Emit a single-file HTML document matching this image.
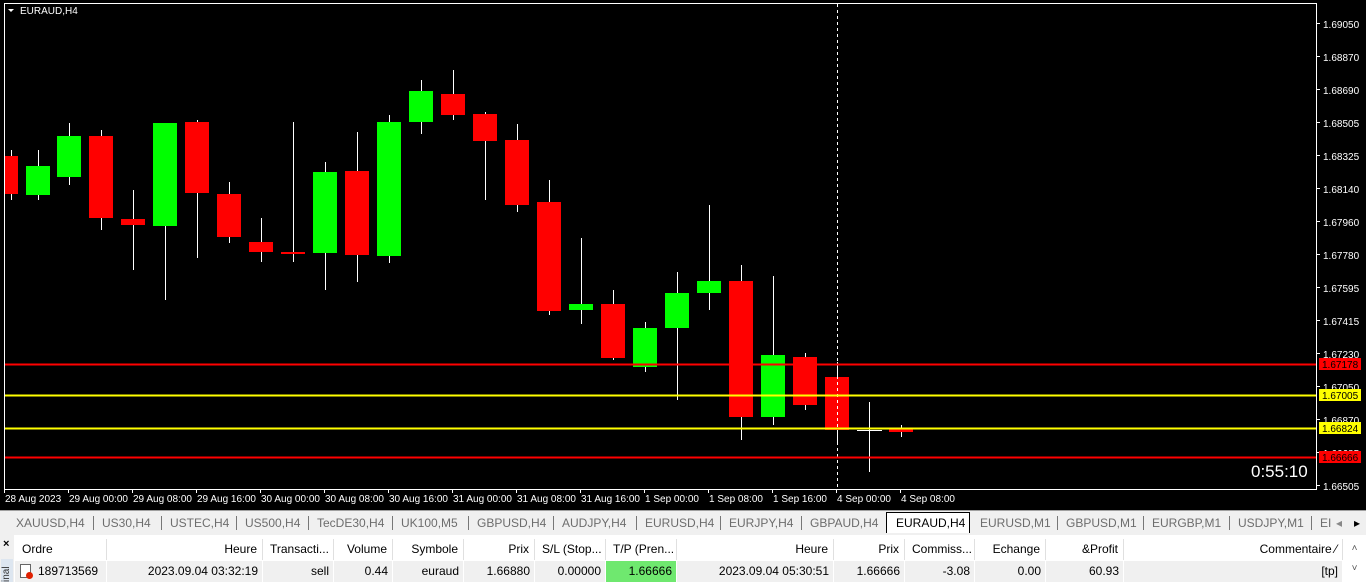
<!DOCTYPE html>
<html><head><meta charset="utf-8"><style>
*{margin:0;padding:0;box-sizing:border-box}
body{width:1366px;height:582px;overflow:hidden;background:#f0f0f0;font-family:"Liberation Sans",sans-serif;font-size:12px;position:relative}
#c{position:absolute;left:0;top:0}
.tabs{position:absolute;left:0;top:510px;width:1366px;height:23px;background:#f0f0f0;border-top:1px solid #a0a0a0}
.tab{position:absolute;top:3px;height:18px;color:#6d6d6d;font-size:12px;line-height:18px}
.sep{position:absolute;top:5px;width:1px;height:14px;background:#777}
.tbl{position:absolute;left:0;top:535px;width:1366px;height:47px;background:#fff}
.h,.r{position:absolute;height:21px;line-height:21px;font-size:12px;color:#000;white-space:nowrap;overflow:hidden}
.h{top:4px;background:#fff;border-right:1px solid #e0e0e0}
.r{top:26px;background:#f0f0f0;border-right:1px solid #fff}
</style></head><body>
<svg id="c" width="1366" height="510" xmlns="http://www.w3.org/2000/svg" font-family="Liberation Sans,sans-serif">
<rect x="0" y="0" width="1366" height="510" fill="#000"/>
<rect x="4.5" y="3.5" width="1312" height="486" fill="none" stroke="#fff"/>
<g id="cand"></g>
<line x1="837.5" y1="4" x2="837.5" y2="489" stroke="#fff" stroke-dasharray="3,3"/>
<line x1="5" y1="364.5" x2="1316" y2="364.5" stroke="#f00" stroke-width="2"/>
<line x1="5" y1="395.5" x2="1316" y2="395.5" stroke="#ff0" stroke-width="2"/>
<line x1="5" y1="428.5" x2="1316" y2="428.5" stroke="#ff0" stroke-width="2"/>
<line x1="5" y1="457.5" x2="1316" y2="457.5" stroke="#f00" stroke-width="2"/>
<polygon points="8,9 14,9 11,12" fill="#fff"/>
<text x="20" y="14" fill="#fff" font-size="10">EURAUD,H4</text>
<g id="ax" fill="#fff" font-size="10"></g>
<rect x="1319" y="358" width="42" height="12" fill="#f00"/><text x="1322" y="368" font-size="10" fill="#000">1.67178</text>
<rect x="1319" y="389" width="42" height="12" fill="#ff0"/><text x="1322" y="399" font-size="10" fill="#000">1.67005</text>
<rect x="1319" y="422" width="42" height="12" fill="#ff0"/><text x="1322" y="432" font-size="10" fill="#000">1.66824</text>
<rect x="1319" y="451" width="42" height="12" fill="#f00"/><text x="1322" y="461" font-size="10" fill="#000">1.66666</text>
<text x="1251" y="477" fill="#fff" font-size="17">0:55:10</text>
<g id="tm" fill="#fff" font-size="10"></g>
</svg>
<div class="tabs" id="tabs"></div>
<div class="tbl">
<div style="position:absolute;left:0;top:0;width:14px;height:47px;background:#f0f0f0"><div style="position:absolute;left:3px;top:3px;font-size:11px;font-weight:bold">×</div><div style="position:absolute;left:1px;top:24px;width:12px;height:23px;background:#dde6f0;font-size:10px;color:#333;writing-mode:vertical-rl;transform:rotate(180deg)">inal</div></div>
<div id="rows"></div>
<div style="position:absolute;left:1343px;top:4px;width:23px;height:43px;background:#fff;font-size:10px;color:#555;text-align:center;line-height:20px">˄<br>˅</div>
</div>
<script>
var C=[[11,1,156,194,150,200,1],[38,0,166,195,150,200],[69,0,136,177,123,185],[101,1,136,218,130,230],[133,1,219,225,190,270],[165,0,123,226,123,300],[197,1,122,193,120,258],[229,1,194,237,182,243],[261,1,242,252,218,262],[293,1,252,254,122,262],[325,0,172,253,162,290],[357,1,171,255,132,282],[389,0,122,256,115,263],[421,0,91,122,80,134],[453,1,94,115,70,120],[485,1,114,141,112,200],[517,1,140,205,124,212],[549,1,202,311,180,315],[581,0,304,310,238,324],[613,1,304,358,290,360],[645,0,328,367,322,372],[677,0,293,328,272,400],[709,0,281,293,205,310],[741,1,281,417,265,440],[773,0,355,417,276,425],[805,1,357,405,353,410],[837,1,377,430,362,445],[901,1,428,432,425,437]];
var s='';C.forEach(function(c){var x=c[0],col=c[1]?'#f00':'#0f0';var l=x-12,w=24;if(c[6]){l=5;w=13;}
s+='<line x1="'+(x+.5)+'" y1="'+c[4]+'" x2="'+(x+.5)+'" y2="'+c[5]+'" stroke="#fff"/>';
s+='<rect x="'+l+'" y="'+c[2]+'" width="'+w+'" height="'+(c[3]-c[2])+'" fill="'+col+'"/>';});
s+='<line x1="869.5" y1="402" x2="869.5" y2="472" stroke="#fff"/><line x1="857" y1="430.5" x2="882" y2="430.5" stroke="#fff"/>';
document.getElementById('cand').innerHTML=s;
var P=['1.69050','1.68870','1.68690','1.68505','1.68325','1.68140','1.67960','1.67780','1.67595','1.67415','1.67230','1.67050','1.66870','1.66685','1.66505'];
s='';P.forEach(function(p,i){var y=24+i*33;s+='<line x1="1316" y1="'+(y-.5)+'" x2="1320" y2="'+(y-.5)+'" stroke="#fff"/><text x="1323" y="'+(y+4)+'">'+p+'</text>';});
document.getElementById('ax').innerHTML=s;
var T=['28 Aug 2023','29 Aug 00:00','29 Aug 08:00','29 Aug 16:00','30 Aug 00:00','30 Aug 08:00','30 Aug 16:00','31 Aug 00:00','31 Aug 08:00','31 Aug 16:00','1 Sep 00:00','1 Sep 08:00','1 Sep 16:00','4 Sep 00:00','4 Sep 08:00'];
var TX=[4,68,132,196,260,324,388,452,516,580,644,708,772,836,900];
s='';T.forEach(function(t,i){s+='<line x1="'+(TX[i]+.5)+'" y1="489" x2="'+(TX[i]+.5)+'" y2="493" stroke="#fff"/><text x="'+(TX[i]+1)+'" y="502">'+t+'</text>';});
document.getElementById('tm').innerHTML=s;
var tabs=[['XAUUSD,H4',16],['US30,H4',102],['USTEC,H4',170],['US500,H4',245],['TecDE30,H4',317],['UK100,M5',401],['GBPUSD,H4',477],['AUDJPY,H4',562],['EURUSD,H4',645],['EURJPY,H4',729],['GBPAUD,H4',810],['EURAUD,H4',896],['EURUSD,M1',980],['GBPUSD,M1',1066],['EURGBP,M1',1152],['USDJPY,M1',1238],['EI',1320]];
s='';tabs.forEach(function(t,i){if(t[0]=='EURAUD,H4')s+='<div style="position:absolute;left:886px;top:1px;width:84px;height:21px;background:#fff;border:1px solid #000;border-bottom:none"></div><div class="tab" style="left:'+t[1]+'px;color:#000">'+t[0]+'</div>';else s+='<div class="tab" style="left:'+t[1]+'px">'+t[0]+'</div>';if(i>0&&t[0]!='EURAUD,H4'&&t[0]!='EURUSD,M1')s+='<div class="sep" style="left:'+(t[1]-9)+'px"></div>';});
s+='<div class="tab" style="left:1336px;color:#888">◂</div><div class="tab" style="left:1354px;color:#000">▸</div>';
document.getElementById('tabs').innerHTML=s;
var cols=[[15,107,'Ordre','189713569','l'],[107,263,'Heure','2023.09.04 03:32:19'],[263,334,'Transacti...','sell'],[334,393,'Volume','0.44'],[393,464,'Symbole','euraud'],[464,535,'Prix','1.66880'],[535,606,'S/L (Stop...','0.00000'],[606,677,'T/P (Pren...','1.66666'],[677,834,'Heure','2023.09.04 05:30:51'],[834,905,'Prix','1.66666'],[905,975,'Commiss...','-3.08'],[975,1046,'Echange','0.00'],[1046,1124,'&Profit','60.93'],[1124,1343,'Commentaire  ⁄','[tp]']];
s='';cols.forEach(function(c){var w=c[1]-c[0];var isL=c[4]=='l';
s+='<div class="h" style="left:'+c[0]+'px;width:'+w+'px;text-align:'+(isL?'left':'right')+';padding:0 5px 0 7px">'+c[2]+'</div>';
var bg=c[2].indexOf('T/P')==0?'background:#6fe86f;':'';
s+='<div class="r" style="'+bg+'left:'+c[0]+'px;width:'+w+'px;text-align:'+(isL?'left':'right')+';padding:'+(isL?'0 0 0 23px':'0 4px')+'">'+c[3]+'</div>';});
s+='<div style="position:absolute;left:20px;top:29px;width:11px;height:14px;border:1px solid #666;background:#fff"></div><div style="position:absolute;left:26px;top:37px;width:7px;height:7px;border-radius:50%;background:#e02000"></div>';
document.getElementById('rows').innerHTML=s;
</script>
</body></html>
